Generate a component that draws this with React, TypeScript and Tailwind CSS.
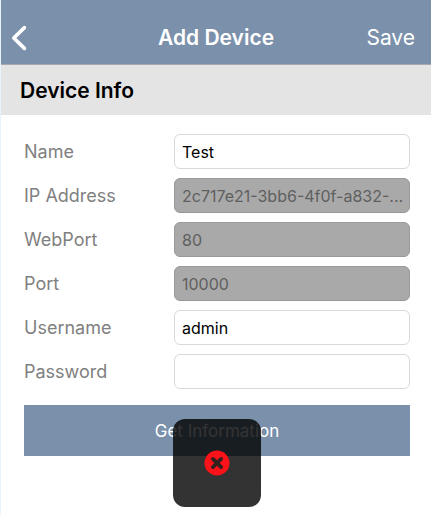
import { useState } from "react"

interface Field {
  id: string;
  label: string;
  value: string;
  type?: string;
  locked?: boolean;
}

const fields: Field[] = [
  { id: "name", label: "Name", value: "Test" },
  { id: "ip", label: "IP Address", value: "2c717e21-3bb6-4f0f-a832-...", locked: true },
  { id: "webport", label: "WebPort", value: "80", locked: true },
  { id: "port", label: "Port", value: "10000", locked: true },
  { id: "username", label: "Username", value: "admin" },
  { id: "password", label: "Password", value: "", type: "password" },
]

function FieldRow({ field }: { field: Field }) {
  const [value, setValue] = useState(field.value)

  return (
    <div className="flex items-center">
      <label htmlFor={field.id} className="w-[150px] shrink-0 text-lg leading-6 text-[#808080]">
        {field.label}
      </label>
      <input
        id={field.id}
        type={field.type ?? "text"}
        value={value}
        disabled={field.locked}
        onChange={(e) => setValue(e.target.value)}
        className="h-[35px] min-w-0 flex-1 rounded-md border border-[#d9d9d9] bg-white pl-[7px] pr-0.5 text-base text-black text-ellipsis outline-none disabled:border-[#999999] disabled:bg-[#a9a9a9] disabled:text-[#5f5f5f]"
      />
    </div>
  )
}

function ErrorHud() {
  return (
    <div
      role="alert"
      aria-label="Error"
      className="absolute left-1/2 top-[14px] flex size-[88px] -translate-x-1/2 items-center justify-center rounded-xl bg-black/80"
    >
      <svg viewBox="0 0 26 26" className="size-[26px]" fill="none">
        <circle cx="13" cy="13" r="12.5" fill="#fc1219" />
        <path d="M8.9 8.9l8.2 8.2M17.1 8.9l-8.2 8.2" stroke="#33201f" strokeWidth="3.8" strokeLinecap="round" />
      </svg>
    </div>
  )
}

export default function App() {
  return (
    <div className="min-h-screen border-l border-[#eaf2fd] bg-white font-['Inter',sans-serif]">
      <header className="grid h-[65px] grid-cols-[1fr_auto_1fr] items-center border-b border-[#a3a9ae] bg-[#7b90ab] pt-3 text-white">
        <button type="button" aria-label="Back" className="justify-self-start pl-2">
          <svg viewBox="0 0 20 28" className="h-7 w-5" fill="none">
            <path d="M15.4 3.6L4.8 14l10.6 10.4" stroke="currentColor" strokeWidth="3.6" strokeLinecap="round" strokeLinejoin="round" />
          </svg>
        </button>
        <h1 className="text-[21px] leading-7 font-semibold">Add Device</h1>
        <button type="button" className="justify-self-end pr-4 text-[21px] leading-7">
          Save
        </button>
      </header>

      <h2 className="bg-[#e4e4e4] px-[19px] pt-3 pb-2.5 text-[21px] leading-7 font-semibold text-black">
        Device Info
      </h2>

      <main className="pt-[19px] pl-[23px] pr-[21px]">
        <form onSubmit={(e) => e.preventDefault()}>
          <div className="flex flex-col gap-[9px]">
            {fields.map((field) => (
              <FieldRow key={field.id} field={field} />
            ))}
          </div>
          <div className="relative mt-4">
            <button type="submit" className="h-[51px] w-full bg-[#7b90ab] text-[17px] leading-6 text-white">
              Get Information
            </button>
            <ErrorHud />
          </div>
        </form>
      </main>
    </div>
  )
}
